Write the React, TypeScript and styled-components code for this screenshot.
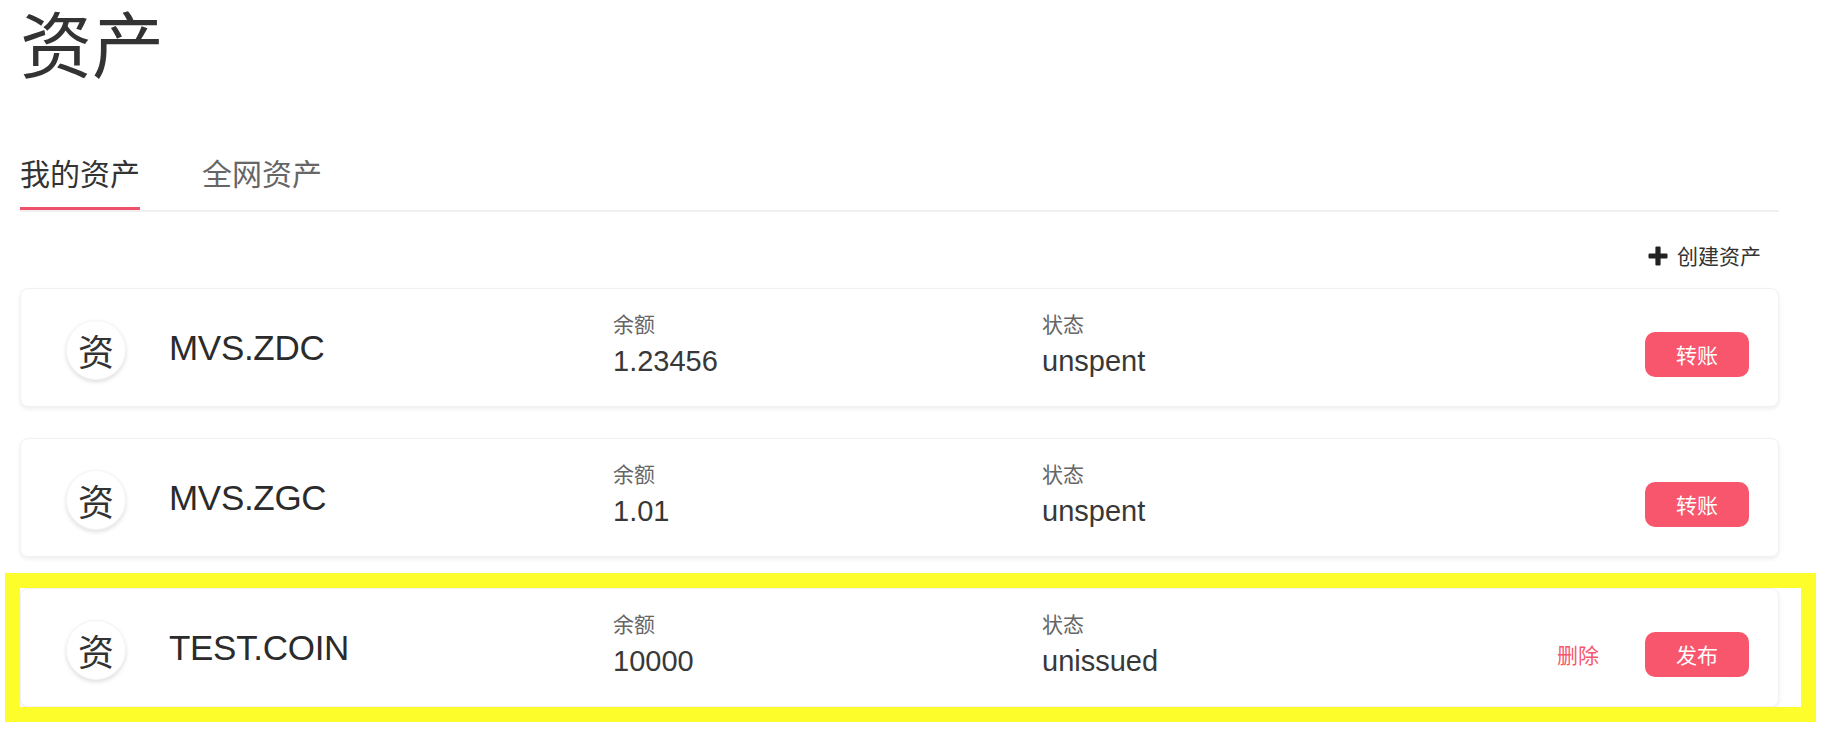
import React from "react";
import styled, { createGlobalStyle } from "styled-components";

const GlobalStyle = createGlobalStyle`
  html, body {
    margin: 0;
    padding: 0;
    background: #ffffff;
  }
  body {
    font-family: "Liberation Sans", "Noto Sans CJK SC", sans-serif;
    color: #333333;
  }
  * { box-sizing: border-box; }
`;

const CJK = `"Noto Sans CJK SC", "Liberation Sans", sans-serif`;
const LATIN = `"Liberation Sans", "Noto Sans CJK SC", sans-serif`;
const RED = "#f7566c";

const Page = styled.div`
  min-height: 738px;
  padding: 5px 42px 31px 20px;
`;

const Title = styled.h1`
  margin: 0;
  font-family: ${CJK};
  font-size: 72px;
  line-height: 72px;
  font-weight: 400;
  color: #333333;
`;

const TabBar = styled.div`
  display: flex;
  gap: 62px;
  margin-top: 80px;
  border-bottom: 2px solid #f0f0f0;
`;

const Tab = styled.div<{ $active?: boolean }>`
  font-family: ${CJK};
  font-size: 30px;
  line-height: 30px;
  padding-bottom: 20px;
  color: ${(p) => (p.$active ? "#333333" : "#666666")};
  border-bottom: 3px solid ${(p) => (p.$active ? "#ef506a" : "transparent")};
  cursor: pointer;
`;

const Toolbar = styled.div`
  display: flex;
  justify-content: flex-end;
  padding-right: 18px;
  margin-top: 33px;
`;

const CreateButton = styled.div`
  display: flex;
  align-items: center;
  gap: 9px;
  font-family: ${CJK};
  font-size: 21px;
  line-height: 21px;
  color: #333333;
  cursor: pointer;
`;

const List = styled.div`
  display: flex;
  flex-direction: column;
  gap: 31px;
  margin-top: 22px;
`;

const Highlight = styled.div`
  margin-right: -22px;
  padding-right: 22px;
  outline: 15px solid #fdfd2b;
`;

const Card = styled.div`
  display: grid;
  grid-template-columns: 103px 444px 429px 1fr auto;
  align-items: center;
  height: 119px;
  padding: 0 29px 0 45px;
  background: #ffffff;
  border: 1px solid #f2f2f2;
  border-radius: 8px;
  box-shadow: 0 2px 4px rgba(0, 0, 0, 0.07);
`;

const Avatar = styled.div`
  width: 60px;
  height: 60px;
  margin-top: 5px;
  border-radius: 50%;
  background: #ffffff;
  border: 1px solid #f6f6f6;
  box-shadow: 0 2px 4px rgba(0, 0, 0, 0.13);
  display: flex;
  align-items: center;
  justify-content: center;
  font-family: ${CJK};
  font-size: 36px;
  line-height: 36px;
  color: #333333;
`;

const Name = styled.div`
  font-family: ${LATIN};
  font-size: 35px;
  line-height: 35px;
  color: #2b2b2b;
  letter-spacing: -0.3px;
`;

const Info = styled.div`
  align-self: start;
  padding-top: 19px;
  display: flex;
  flex-direction: column;
`;

const Label = styled.div`
  font-family: ${CJK};
  font-size: 21px;
  line-height: 30px;
  color: #666666;
`;

const Value = styled.div`
  margin-top: 6px;
  font-family: ${LATIN};
  font-size: 29px;
  line-height: 35px;
  color: #383838;
`;

const Actions = styled.div`
  align-self: start;
  margin-top: 43px;
  display: flex;
  align-items: center;
  gap: 46px;
`;

const TextButton = styled.span`
  font-family: ${CJK};
  font-size: 21px;
  line-height: 21px;
  color: ${RED};
  cursor: pointer;
`;

const PrimaryButton = styled.button`
  width: 104px;
  height: 45px;
  border: none;
  border-radius: 10px;
  background: ${RED};
  color: #ffffff;
  font-family: ${CJK};
  font-size: 21px;
  line-height: 21px;
  padding: 0;
  cursor: pointer;
`;

const PlusIcon = () => (
  <svg width="20" height="20" viewBox="0 0 20 20" aria-hidden="true">
    <path
      d="M7.4 1.5 Q7.4 0.5 8.4 0.5 H11.6 Q12.6 0.5 12.6 1.5 V7.4 H18.5 Q19.5 7.4 19.5 8.4 V11.6 Q19.5 12.6 18.5 12.6 H12.6 V18.5 Q12.6 19.5 11.6 19.5 H8.4 Q7.4 19.5 7.4 18.5 V12.6 H1.5 Q0.5 12.6 0.5 11.6 V8.4 Q0.5 7.4 1.5 7.4 H7.4 Z"
      fill="#222222"
    />
  </svg>
);

type Asset = {
  name: string;
  balance: string;
  status: string;
  issued: boolean;
};

const assets: Asset[] = [
  { name: "MVS.ZDC", balance: "1.23456", status: "unspent", issued: true },
  { name: "MVS.ZGC", balance: "1.01", status: "unspent", issued: true },
  { name: "TEST.COIN", balance: "10000", status: "unissued", issued: false },
];

const AssetCard = ({ asset }: { asset: Asset }) => (
  <Card>
    <Avatar>资</Avatar>
    <Name>{asset.name}</Name>
    <Info>
      <Label>余额</Label>
      <Value>{asset.balance}</Value>
    </Info>
    <Info>
      <Label>状态</Label>
      <Value>{asset.status}</Value>
    </Info>
    <Actions>
      {asset.issued ? (
        <PrimaryButton>转账</PrimaryButton>
      ) : (
        <>
          <TextButton>删除</TextButton>
          <PrimaryButton>发布</PrimaryButton>
        </>
      )}
    </Actions>
  </Card>
);

export default function App() {
  return (
    <>
      <GlobalStyle />
      <Page>
        <Title>资产</Title>
        <TabBar>
          <Tab $active>我的资产</Tab>
          <Tab>全网资产</Tab>
        </TabBar>
        <Toolbar>
          <CreateButton>
            <PlusIcon />
            <span>创建资产</span>
          </CreateButton>
        </Toolbar>
        <List>
          {assets.map((a) =>
            a.issued ? (
              <AssetCard key={a.name} asset={a} />
            ) : (
              <Highlight key={a.name}>
                <AssetCard asset={a} />
              </Highlight>
            )
          )}
        </List>
      </Page>
    </>
  );
}
